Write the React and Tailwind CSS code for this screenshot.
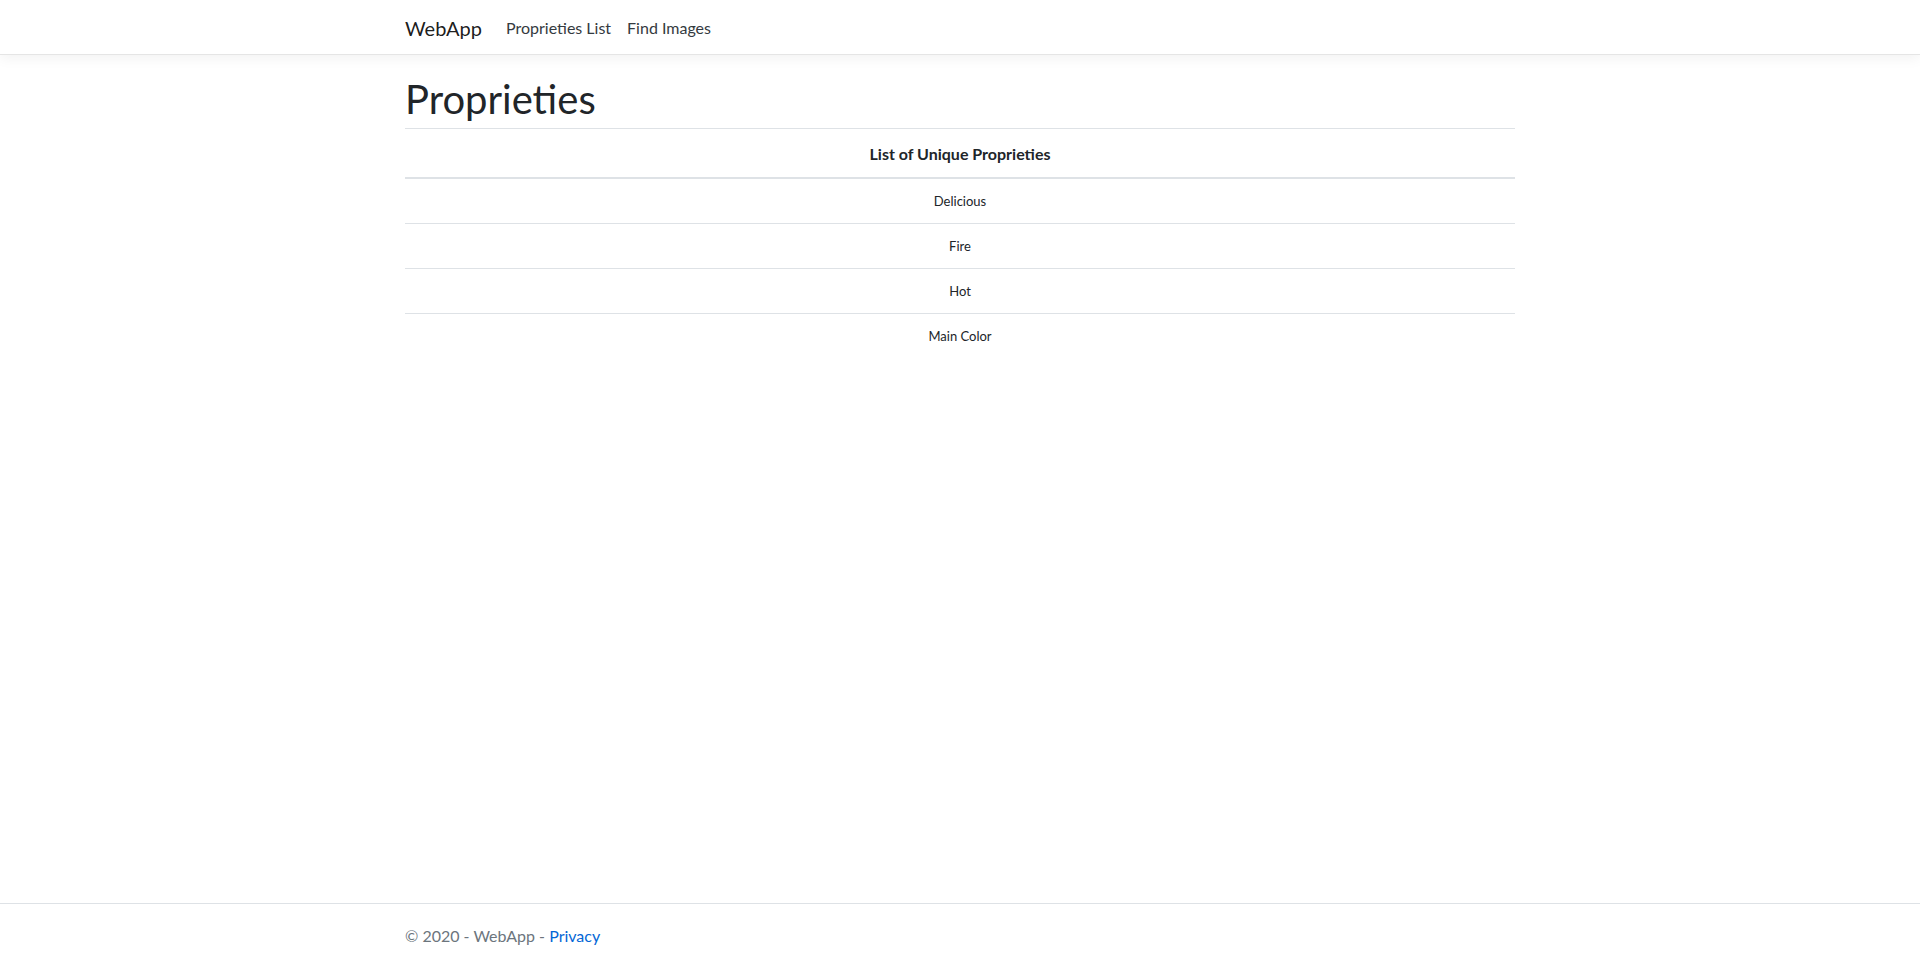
const items = ['Delicious', 'Fire', 'Hot', 'Main Color']

export default function App() {
    return (
        <div className="min-h-screen flex flex-col bg-white text-[#212529] font-['Lato','Noto_Sans',sans-serif]">
            <header className="h-[55px] border-b border-[#e5e5e5] bg-white shadow-[0_4px_12px_rgba(0,0,0,0.05)] mb-[17px]">
                <div className="w-[1110px] mx-auto h-full flex items-center pt-[2px]">
                    <a className="text-[20px] leading-[30px] text-black/90 mr-4">WebApp</a>
                    <a className="px-2 text-[16px] text-[#343a40]">Proprieties List</a>
                    <a className="px-2 text-[16px] text-[#343a40]">Find Images</a>
                </div>
            </header>

            <main className="w-[1110px] mx-auto">
                <h1 className="text-[40px] leading-[48px] font-normal pt-[3px] mb-[5px]">Proprieties</h1>
                <table className="w-full">
                    <thead>
                        <tr>
                            <th className="border-t border-b-2 border-[#dee2e6] pt-[13px] pb-[11px] text-[16px] leading-6 font-bold text-center">
                                List of Unique Proprieties
                            </th>
                        </tr>
                    </thead>
                    <tbody>
                        {items.map((p, i) => (
                            <tr key={p}>
                                <td className={`pt-[13px] pb-3 text-[13px] leading-[19px] text-center ${i > 0 ? 'border-t border-[#dee2e6]' : ''}`}>
                                    {p}
                                </td>
                            </tr>
                        ))}
                    </tbody>
                </table>
            </main>

            <footer className="mt-auto border-t border-[#dee2e6] h-[60px]">
                <div className="w-[1110px] mx-auto h-full flex items-center pt-1 text-[16px] text-[#6c757d]">
                    © 2020 - WebApp -&nbsp;<a className="text-[#0366d6]">Privacy</a>
                </div>
            </footer>
        </div>
    )
}
